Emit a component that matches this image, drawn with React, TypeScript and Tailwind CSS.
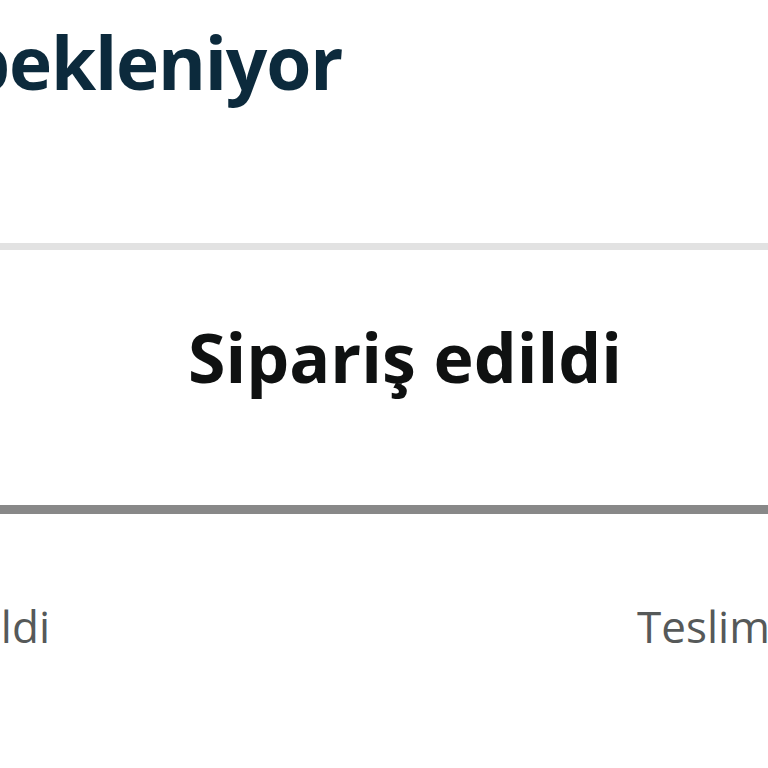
export default function App() {
  return (
    <div className="w-[768px] h-[768px] overflow-hidden bg-white font-['Open_Sans',sans-serif]">
      {/* Heading */}
      <div className="h-[243px] pt-[12px] overflow-hidden">
        <h1 className="ml-[-36px] whitespace-nowrap text-[73px] leading-[100px] font-bold tracking-[-1.2px] text-[#0c2a3c]">
          bekleniyor
        </h1>
      </div>

      {/* Divider */}
      <div className="h-[7px] bg-[#e2e2e2]" />

      {/* Status */}
      <div className="h-[255px] flex items-center justify-center">
        <span className="ml-[42px] mt-[-42px] whitespace-nowrap text-[68px] font-bold tracking-[0px] text-[#0f1111]">
          Sipariş edildi
        </span>
      </div>

      {/* Progress bar */}
      <div className="h-[9px] bg-[#888888]" />

      {/* Step labels */}
      <div className="flex items-start pt-[82px] whitespace-nowrap text-[44px] leading-[60px] text-[#565959]">
        <div className="w-[50px] shrink-0 flex justify-end">
          <span>Sipariş edildi</span>
        </div>
        <span className="ml-[587px]">Teslim edildi</span>
      </div>
    </div>
  )
}
